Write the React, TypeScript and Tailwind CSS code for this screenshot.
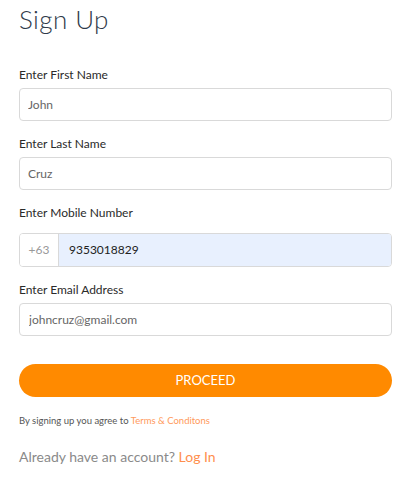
export default function App() {
  return (
    <div className="min-h-screen bg-white px-[19px] pt-[3px] font-['Lato','Liberation_Sans',sans-serif] w-[414px]">
      <h1 className="text-[26px] font-light leading-[32px] text-[#2f3a4a] tracking-[0.4px]">Sign Up</h1>

      <form className="mt-[32px] flex flex-col w-[373px]">
        <div className="flex flex-col">
          <label className="text-[12px] leading-[15px] text-[#2a2a2a]">Enter First Name</label>
          <input
            defaultValue="John"
            className="mt-[6px] h-[33px] rounded-[4px] border border-[#d9d9d9] px-[8px] text-[12px] text-[#666] outline-none"
          />
        </div>

        <div className="mt-[15px] flex flex-col">
          <label className="text-[12px] leading-[15px] text-[#2a2a2a]">Enter Last Name</label>
          <input
            defaultValue="Cruz"
            className="mt-[6px] h-[33px] rounded-[4px] border border-[#d9d9d9] px-[8px] text-[12px] text-[#666] outline-none"
          />
        </div>

        <div className="mt-[15px] flex flex-col">
          <label className="text-[12px] leading-[15px] text-[#2a2a2a]">Enter Mobile Number</label>
          <div className="mt-[13px] flex h-[34px] rounded-[4px] border border-[#d9d9d9] overflow-hidden">
            <span className="flex w-[39px] items-center justify-center border-r border-[#d9d9d9] bg-white text-[12px] text-[#999]">
              +63
            </span>
            <input
              defaultValue="9353018829"
              className="flex-1 bg-[#e8f0fe] px-[10px] text-[12px] text-[#222] outline-none"
            />
          </div>
        </div>

        <div className="mt-[15px] flex flex-col">
          <label className="text-[12px] leading-[15px] text-[#2a2a2a]">Enter Email Address</label>
          <input
            defaultValue="johncruz@gmail.com"
            className="mt-[6px] h-[33px] rounded-[4px] border border-[#d9d9d9] px-[9px] text-[12px] text-[#666] outline-none"
          />
        </div>

        <button
          type="button"
          className="mt-[28px] h-[33px] rounded-full bg-[#ff8a00] text-[13px] text-white"
        >
          PROCEED
        </button>

        <p className="mt-[18px] text-[9.5px] leading-[12px] text-[#555]">
          By signing up you agree to <a className="text-[#ff9a5c]">Terms &amp; Conditons</a>
        </p>

        <p className="mt-[21px] text-[14px] leading-[18px] text-[#8a8a8a]">
          Already have an account? <a className="text-[#ff8f4d]">Log In</a>
        </p>
      </form>
    </div>
  )
}
